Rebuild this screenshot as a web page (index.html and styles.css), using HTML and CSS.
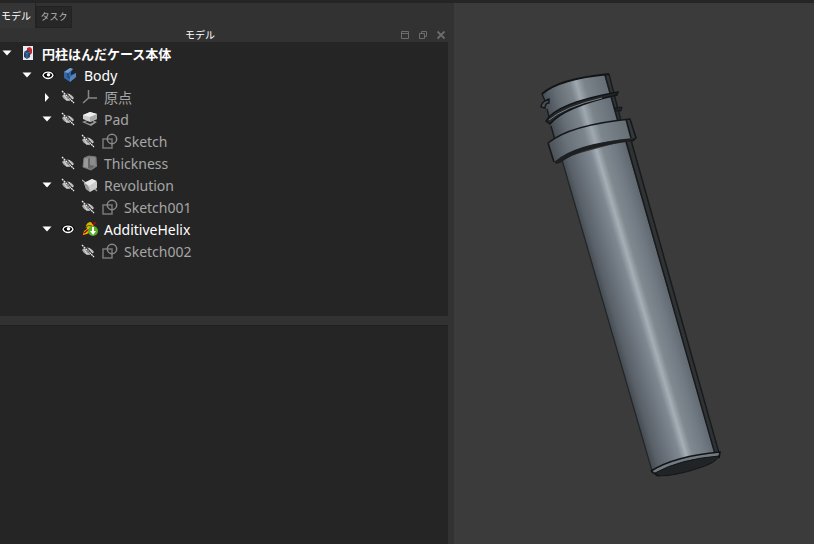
FILE: index.html
```html
<!DOCTYPE html>
<html lang="ja">
<head>
<meta charset="utf-8">
<title>円柱はんだケース本体</title>
<link rel="stylesheet" href="styles.css">
</head>
<body>
<svg class="defs" aria-hidden="true">
  <symbol id="down" viewBox="0 0 10 10"><path d="M.5 2.500h9L5 7.500z" fill="#fff"/></symbol>
  <symbol id="right" viewBox="0 0 10 10"><path d="M3 1l4 4.500-4 4.500z" fill="#fff"/></symbol>
  <symbol id="eye" viewBox="0 0 16 16">
    <path d="M1 8Q8-1 15 8Q8 17 1 8z" fill="#000"/>
    <path d="M3 8.500C4 4 12 4 13 8.500C11 12.500 5 12.500 3 8.500z" fill="none" stroke="#fff" stroke-width="1.300"/>
    <circle cx="8.500" cy="7.700" r="1.800" fill="#fff"/>
  </symbol>
  <symbol id="hidden" viewBox="0 0 16 16">
    <path d="M2 7C5 3 11 4 14 9C11 13 5 13 2 7z" fill="#aaa"/>
    <path d="M4 6l3 5M9 5l4 5M6 11h5" stroke="#d8d8d8"/>
    <path d="M3 2l11 12" stroke="#252525" stroke-width="2.400"/>
    <path d="M2 2l12 12" stroke="#eee" stroke-width="1.300" stroke-dasharray="2 .6"/>
    <circle cx="8" cy="8" r="1.200" fill="#888"/>
  </symbol>
  <symbol id="document" viewBox="0 0 16 16">
    <path d="M3 1h10v14H3z" fill="#e8eaed"/>
    <path d="M7 3l3-1 2 2v4l-2 2-3-3z" fill="#c5272d"/>
    <path d="M4 7l3-2 3 2v5l-3 2-3-2z" fill="#24466e"/>
    <path d="M4 7l3 1.500L10 7M7 8.500V13" fill="none" stroke="#5b87b8" stroke-width=".8"/>
  </symbol>
  <symbol id="body" viewBox="0 0 16 16">
    <path d="M2 5l6-4 3 1-2 3v3l5-2v4l-6 5-6-4z" fill="#3465a4"/>
    <path d="M2 5l6-4 3 1-5 4z" fill="#729fcf"/>
    <path d="M8 10l6-4v4l-6 5z" fill="#5584bd"/>
    <path d="M6 6v4l2 1" fill="none" stroke="#173c6b"/>
  </symbol>
  <symbol id="origin" viewBox="0 0 16 16"><path d="M6.500 1v8H15M6.500 9L1 14" fill="none" stroke="#888" stroke-width="1.500"/></symbol>
  <symbol id="pad" viewBox="0 0 16 16">
    <path d="M0 11l8-3 7 3-6 4z" fill="#999"/>
    <path d="M3 11l5-2 4 2-4 2z" fill="#252525"/>
    <path d="M1 4l7-3 7 2v5l-7 3-7-3z" fill="#ccc"/>
    <path d="M1 4l7-3 7 2-7 3z" fill="#eee"/>
    <path d="M8 6l7-3v5l-7 3z" fill="#aaa"/>
  </symbol>
  <symbol id="thickness" viewBox="0 0 16 16">
    <path d="M2 3l5-2 7 1 1 9-6 4-8-3z" fill="#888"/>
    <path d="M2 3l4 1v9l-5-1z" fill="#999"/>
    <path d="M6 4l2-2v8l5 1-4 3-3-1z" fill="#666"/>
    <path d="M8 2l6 1v7l-6-1z" fill="#8c8c8c"/>
    <path d="M2 3l5-2 7 1v8M2 3l-1 9 8 3 6-4" fill="none" stroke="#777"/>
  </symbol>
  <symbol id="revolution" viewBox="0 0 16 16">
    <path d="M0 3l4 3M12 11l3 3" stroke="#999" stroke-width="1.500"/>
    <path d="M2 6l8-4 5 3v6l-7 4-4-3z" fill="#ccc"/>
    <path d="M2 6l8-4 5 2-8 5z" fill="#e8e8e8"/>
    <path d="M2 6q5 1 6 9l-4-3z" fill="#999"/>
  </symbol>
  <symbol id="sketch" viewBox="0 0 16 16">
    <path d="M1 6h9v9H1z" fill="none" stroke="#777" stroke-width="1.500"/>
    <circle cx="10" cy="6" r="4.700" fill="none" stroke="#888" stroke-width="1.500"/>
  </symbol>
  <symbol id="helix" viewBox="0 0 16 16">
    <path d="M1 14L14 1" stroke="#c00" stroke-width="1.500"/>
    <path d="M4 5q1-4 5-4l2 3 2 3-8 6-4 1 1-4 3-2z" fill="#d8b800"/>
    <path d="M3 7q3-4 7-2M3 12q2-4 6-4" fill="none" stroke="#5c5000"/>
    <path d="M2 12l4-3" stroke="#c00" stroke-width="1.500"/>
    <circle cx="11" cy="10" r="5" fill="#58ad25"/>
    <path d="M10 6h2v4h2l-3 4-3-4h2z" fill="#fff"/>
  </symbol>
</svg>
<div class="app">
  <aside class="side">
    <div class="tabs" role="tablist">
      <button class="tab selected" role="tab" aria-selected="true">モデル</button>
      <button class="tab" role="tab" aria-selected="false">タスク</button>
    </div>
    <header class="dock">
      <h1 class="dock-title">モデル</h1>
      <div class="dock-tools">
        <button class="tool" aria-label="最小化"><svg viewBox="0 0 10 10"><path d="M1.500 1.500h7v7h-7zM2 3.500h6" /></svg></button>
        <button class="tool" aria-label="フロート"><svg viewBox="0 0 10 10"><path d="M1.500 3.500h5v5h-5zM3.500 3V1.500h5v5H7"/></svg></button>
        <button class="tool" aria-label="閉じる"><svg viewBox="0 0 10 10"><path d="M1.500 1.500l7 7M8.500 1.500l-7 7" stroke-width="1.800"/></svg></button>
      </div>
    </header>
    <ul class="tree" role="tree">
      <li>
        <div class="row root"><button class="arrow" aria-label="折りたたむ"><svg><use href="#down"/></svg></button><svg class="icon"><use href="#document"/></svg><span class="name">円柱はんだケース本体</span></div>
        <ul>
          <li>
            <div class="row shown"><button class="arrow" aria-label="折りたたむ"><svg><use href="#down"/></svg></button><button class="eye" aria-label="表示"><svg><use href="#eye"/></svg></button><svg class="icon"><use href="#body"/></svg><span class="name">Body</span></div>
            <ul>
              <li><div class="row"><button class="arrow" aria-label="展開"><svg><use href="#right"/></svg></button><button class="eye" aria-label="非表示"><svg><use href="#hidden"/></svg></button><svg class="icon"><use href="#origin"/></svg><span class="name">原点</span></div></li>
              <li>
                <div class="row"><button class="arrow" aria-label="折りたたむ"><svg><use href="#down"/></svg></button><button class="eye" aria-label="非表示"><svg><use href="#hidden"/></svg></button><svg class="icon"><use href="#pad"/></svg><span class="name">Pad</span></div>
                <ul><li><div class="row"><span class="arrow"></span><button class="eye" aria-label="非表示"><svg><use href="#hidden"/></svg></button><svg class="icon"><use href="#sketch"/></svg><span class="name">Sketch</span></div></li></ul>
              </li>
              <li><div class="row"><span class="arrow"></span><button class="eye" aria-label="非表示"><svg><use href="#hidden"/></svg></button><svg class="icon"><use href="#thickness"/></svg><span class="name">Thickness</span></div></li>
              <li>
                <div class="row"><button class="arrow" aria-label="折りたたむ"><svg><use href="#down"/></svg></button><button class="eye" aria-label="非表示"><svg><use href="#hidden"/></svg></button><svg class="icon"><use href="#revolution"/></svg><span class="name">Revolution</span></div>
                <ul><li><div class="row"><span class="arrow"></span><button class="eye" aria-label="非表示"><svg><use href="#hidden"/></svg></button><svg class="icon"><use href="#sketch"/></svg><span class="name">Sketch001</span></div></li></ul>
              </li>
              <li>
                <div class="row shown"><button class="arrow" aria-label="折りたたむ"><svg><use href="#down"/></svg></button><button class="eye" aria-label="表示"><svg><use href="#eye"/></svg></button><svg class="icon"><use href="#helix"/></svg><span class="name">AdditiveHelix</span></div>
                <ul><li><div class="row"><span class="arrow"></span><button class="eye" aria-label="非表示"><svg><use href="#hidden"/></svg></button><svg class="icon"><use href="#sketch"/></svg><span class="name">Sketch002</span></div></li></ul>
              </li>
            </ul>
          </li>
        </ul>
      </li>
    </ul>
    <section class="properties" aria-label="プロパティ"></section>
  </aside>
  <main class="view">
    <svg class="model" viewBox="454 3 360 541" role="img" aria-label="円柱ケースの3Dモデル">
      <defs>
        <linearGradient id="tube" gradientUnits="userSpaceOnUse" x1="605" y1="310" x2="673" y2="290">
          <stop offset="0" stop-color="#444a50"/><stop offset=".1" stop-color="#596068"/><stop offset=".3" stop-color="#6f7780"/><stop offset=".43" stop-color="#7f8890"/><stop offset=".52" stop-color="#a6aeb6"/><stop offset=".61" stop-color="#808890"/><stop offset=".78" stop-color="#727a83"/><stop offset="1" stop-color="#596068"/>
        </linearGradient>
        <linearGradient id="neck" gradientUnits="userSpaceOnUse" x1="542" y1="97" x2="611" y2="77">
          <stop offset="0" stop-color="#454b51"/><stop offset=".2" stop-color="#646c74"/><stop offset=".42" stop-color="#7c848c"/><stop offset=".51" stop-color="#a0a8af"/><stop offset=".62" stop-color="#7b838b"/><stop offset="1" stop-color="#5f6770"/>
        </linearGradient>
        <linearGradient id="collar" gradientUnits="userSpaceOnUse" x1="550" y1="148" x2="632" y2="124">
          <stop offset="0" stop-color="#4b5157"/><stop offset=".2" stop-color="#687078"/><stop offset=".43" stop-color="#7c848c"/><stop offset=".53" stop-color="#a0a8af"/><stop offset=".62" stop-color="#7d858d"/><stop offset="1" stop-color="#636b73"/>
        </linearGradient>
      </defs>
      <path d="M562 158L628 140 717 453 652 471z" fill="url(#tube)"/>
      <path d="M625 141L715 454H719L631 138z" fill="#303234"/>
      <path d="M562 160L652 471" stroke="#222629" stroke-width="1.200"/>
      <path d="M626 141L715 454M631 140L719 453" stroke="#181b1e" stroke-width="1.500"/>
      <path d="M651 471Q666 458 720 452Q719 459 708 464 682 475 658 476z" fill="#727a82"/>
      <path d="M655 473Q680 459 719 456 716 463 699 468 676 476 658 476z" fill="#202426" stroke="#121517"/>
      <path d="M651 471Q675 456 720 452L719 458M651 471L658 476" fill="none" stroke="#121517" stroke-width="1.700"/>

      <path d="M542 94Q559 80 608 74L621 122Q585 126 555 140z" fill="url(#neck)"/>
      <path d="M604 74L617 121H621L609 74z" fill="#303437"/>
      <path d="M542 94L545 101M547 109L549 117M551 126L555 140M605 75L618 121M609 74L621 121" fill="none" stroke="#181b1e" stroke-width="1.400"/>
      <path d="M542 94Q558 79 609 74" fill="none" stroke="#121517" stroke-width="2"/>
      <path d="M541 107Q541 102 549 99V103Q545 103 545 108z" fill="#4b5258" stroke="#15181b" stroke-width="1.400"/>
      <path d="M546 121Q556 103 618 92L617 95Q564 107 550 124z" fill="#24282b" stroke="#121517" stroke-width="1.500"/>
      <path d="M549 120Q564 107 602 98" fill="none" stroke="#788087" stroke-width="1"/>
      <path d="M614 108L622 107 621 111 616 111z" fill="#202326" stroke="#15181a"/>

      <path d="M548 143Q570 125 628 119L636 138Q585 141 560 162L554 163z" fill="url(#collar)"/>
      <path d="M626 119L631 138H636L630 119z" fill="#36393b"/>
      <path d="M554 162Q575 143 635 138L634 141Q581 147 560 163L556 164z" fill="#1d2023"/>
      <path d="M548 143Q570 125 630 119L636 138 632 141M626 119L631 138M548 143L554 162" fill="none" stroke="#15181b" stroke-width="1.600"/>
    </svg>
  </main>
</div>
</body>
</html>
```
FILE: styles.css
```css
* { box-sizing: border-box; }
body { margin: 0; background: #323232; color: #fff; font-family: "Noto Sans", "Noto Sans CJK JP", sans-serif; }
button { margin: 0; padding: 0; border: 0; background: none; color: inherit; font: inherit; }
.defs { position: absolute; width: 0; height: 0; }
.app { display: grid; grid-template-columns: 56fr 45fr; gap: 6px; min-height: 100vh; border-top: 3px solid #252525; }
.side { display: flex; flex-direction: column; min-width: 0; }
.tabs { display: flex; align-items: flex-end; height: 25px; font-family: "Noto Sans CJK JP", sans-serif; }
.tab { width: 36px; height: 22px; border: 1px solid #222; background: #272727; color: #b8b8b8; font-size: 9px; line-height: 20px; }
.tab.selected { height: 25px; border-width: 0 1px 0 0; background: #353535; color: #fff; font-size: 10px; line-height: 25px; text-align: left; padding-left: 1px; }
.dock { display: grid; grid-template-columns: 1fr auto 1fr; align-items: center; height: 14px; padding-right: 2px; }
.dock-title { grid-column: 2; margin: 0; padding-right: 46px; font: 10px/14px "Noto Sans CJK JP", sans-serif; }
.dock-tools { display: flex; justify-content: flex-end; gap: 8px; }
.tool { width: 10px; height: 10px; }
.tool svg { display: block; width: 10px; height: 10px; fill: none; stroke: #6c6c6c; }
ul { list-style: none; margin: 0; padding: 0; }
.tree { min-height: 274px; background: #252525; }
.tree ul { padding-left: 20px; }
.row { display: flex; align-items: center; height: 22px; color: #a5a5a5; font-size: 14px; white-space: nowrap; }
.name { padding-top: 2px; line-height: 20px; }
.shown { color: #fff; }
.root { color: #fff; font-size: 13px; font-weight: 700; }
.arrow { flex: none; width: 20px; height: 10px; padding-left: 2px; text-align: left; }
.arrow svg { display: block; width: 10px; height: 10px; }
.eye { flex: none; width: 16px; height: 16px; margin-right: 6px; }
.eye svg { display: block; width: 16px; height: 16px; }
.icon { flex: none; width: 16px; height: 16px; margin-right: 6px; }
.properties { flex: 1; margin-top: 9px; background: #252525; border-top: 1px solid #202020; }
.view { min-width: 0; background: #3b3b3b; }
.model { display: block; width: 100%; height: 100%; }
```
